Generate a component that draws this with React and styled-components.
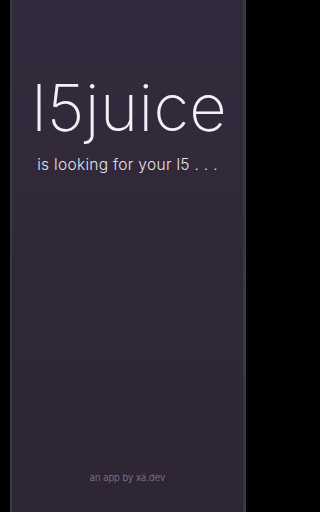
import React from 'react';
import styled, { createGlobalStyle } from 'styled-components';

const Global = createGlobalStyle`
  html, body {
    margin: 0;
    padding: 0;
    background: #000;
  }
  #root {
    height: 512px;
  }
`;

const Frame = styled.div`
  height: 512px;
  width: 256px;
  box-sizing: border-box;
  padding: 0 10px;
  background: #000;
  display: flex;
`;

const Screen = styled.div`
  flex: 1;
  box-sizing: border-box;
  border-left: 2px solid #3d3845;
  border-right: 3px solid #3a3542;
  background: linear-gradient(180deg, #332b3d 0%, #302838 55%, #2d2533 100%);
  display: flex;
  flex-direction: column;
  align-items: center;
  font-family: Inter, "Noto Sans", sans-serif;
`;

const Title = styled.h1`
  margin: 68px 0 0 4px;
  font-size: 65px;
  font-weight: 200;
  line-height: 80px;
  color: #f4f1f6;
  letter-spacing: 0.4px;
`;

const Subtitle = styled.p`
  margin: 7px 0 0;
  font-size: 15.5px;
  font-weight: 300;
  color: #e6e2ea;
  letter-spacing: 0.3px;
`;

const Footer = styled.div`
  margin-top: auto;
  margin-bottom: 29px;
  font-size: 9.5px;
  font-weight: 300;
  color: #8a8192;
`;

export default function App() {
  return (
    <Frame>
      <Global />
      <Screen>
        <Title>l5juice</Title>
        <Subtitle>is looking for your l5 . . .</Subtitle>
        <Footer>an app by xä.dev</Footer>
      </Screen>
    </Frame>
  );
}
